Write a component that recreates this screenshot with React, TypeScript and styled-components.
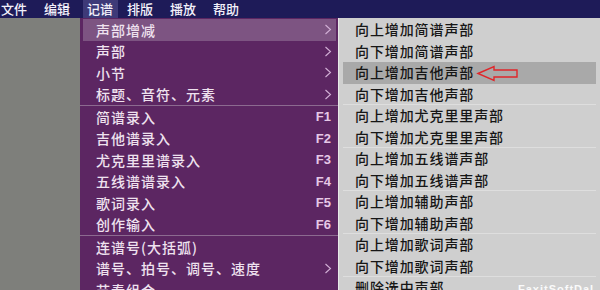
import React from "react";
import styled, { createGlobalStyle } from "styled-components";

const Global = createGlobalStyle`
  html, body { margin: 0; padding: 0; background: #7e7f7b; }
  body { font-family: "Noto Sans CJK SC", "Noto Sans", sans-serif; }
`;

const Screen = styled.div`
  position: relative;
  width: 600px;
  height: 290px;
  overflow: hidden;
  display: flex;
  flex-direction: column;
  background: #7e7f7b;
`;

const MenuBar = styled.div`
  height: 18px;
  flex: none;
  background: #1e1b58;
  display: flex;
  align-items: stretch;
`;

const MenuItem = styled.div<{ $active?: boolean }>`
  width: 43px;
  box-sizing: border-box;
  padding-left: ${(p) => (p.$active ? "4px" : "1px")};
  margin-left: ${(p) => (p.$active ? "-3px" : "0")};
  background: ${(p) => (p.$active ? "#3e3a78" : "transparent")};
  color: #f2f0fa;
  font-size: 13px;
  font-weight: 500;
  line-height: 18px;
`;

const ActiveItem = styled(MenuItem)`
  width: 35px;
  margin-right: 8px;
`;

const Body = styled.div`
  flex: 1;
  display: flex;
  min-height: 0;
`;

const Side = styled.div`
  width: 80px;
  flex: none;
  background: #7e7f7b;
`;

const Menu = styled.div`
  width: 258px;
  flex: none;
  background: #5c2662;
  padding-top: 1px;
  box-sizing: border-box;
  display: flex;
  flex-direction: column;
`;

const Row = styled.div<{ $hot?: boolean }>`
  height: 21.5px;
  flex: none;
  display: flex;
  align-items: center;
  margin: 0 2px 0 3px;
  padding: 0 4px 0 13px;
  background: ${(p) => (p.$hot ? "#7d5482" : "transparent")};
  color: #efe2ef;
  font-size: 14px;
  font-weight: 500;
  letter-spacing: 1px;
`;

const Label = styled.span`
  flex: 1;
  white-space: nowrap;
`;

const Key = styled.span`
  font-family: "Liberation Sans", Arial, sans-serif;
  font-weight: bold;
  font-size: 13px;
  color: #e6c8e6;
  letter-spacing: 0;
  padding-right: 1px;
`;

const Chevron = styled.svg`
  width: 8px;
  height: 11px;
  margin-right: 0;
`;

const Sep = styled.div`
  height: 1px;
  flex: none;
  background: #8c6a90;
`;

const Sub = styled.div`
  flex: 1;
  background: #cfcfcf;
  border-left: 1px solid #e8e8e8;
  padding-top: 1px;
  box-sizing: border-box;
  display: flex;
  flex-direction: column;
`;

const SubRow = styled.div<{ $hot?: boolean; $line?: boolean }>`
  height: 21.5px;
  flex: none;
  box-sizing: border-box;
  display: flex;
  align-items: center;
  margin: 0 4px;
  padding-left: 12px;
  background: ${(p) => (p.$hot ? "#a9a9a9" : "transparent")};
  border-bottom: 1px solid ${(p) => (p.$line ? "#dedede" : "transparent")};
  color: #161616;
  font-size: 14px;
  font-weight: 500;
  letter-spacing: 0.9px;
  white-space: nowrap;
`;

const Arrow = styled.svg`
  position: absolute;
  left: 476px;
  top: 64px;
  width: 46px;
  height: 20px;
`;

const Watermark = styled.div`
  position: absolute;
  left: 518px;
  top: 283px;
  font-family: "Liberation Sans", Arial, sans-serif;
  font-size: 11px;
  font-weight: bold;
  letter-spacing: 1px;
  color: #fafafa;
`;

const Caret = () => (
  <Chevron viewBox="0 0 8 11">
    <path d="M1.5 1 L6.5 5.5 L1.5 10" fill="none" stroke="#d2b0d6" strokeWidth="1.1" />
  </Chevron>
);

const subItems = [
  "向上增加简谱声部",
  "向下增加简谱声部",
  "向上增加吉他声部",
  "向下增加吉他声部",
  "向上增加尤克里里声部",
  "向下增加尤克里里声部",
  "向上增加五线谱声部",
  "向下增加五线谱声部",
  "向上增加辅助声部",
  "向下增加辅助声部",
  "向上增加歌词声部",
  "向下增加歌词声部",
  "删除选中声部",
];

export default function App() {
  return (
    <Screen>
      <Global />
      <MenuBar>
        <MenuItem>文件</MenuItem>
        <MenuItem>编辑</MenuItem>
        <ActiveItem $active>记谱</ActiveItem>
        <MenuItem>排版</MenuItem>
        <MenuItem>播放</MenuItem>
        <MenuItem>帮助</MenuItem>
      </MenuBar>
      <Body>
        <Side />
        <Menu>
          <Row $hot>
            <Label>声部增减</Label>
            <Caret />
          </Row>
          <Row>
            <Label>声部</Label>
            <Caret />
          </Row>
          <Row>
            <Label>小节</Label>
            <Caret />
          </Row>
          <Row>
            <Label>标题、音符、元素</Label>
            <Caret />
          </Row>
          <Sep />
          <Row><Label>简谱录入</Label><Key>F1</Key></Row>
          <Row><Label>吉他谱录入</Label><Key>F2</Key></Row>
          <Row><Label>尤克里里谱录入</Label><Key>F3</Key></Row>
          <Row><Label>五线谱谱录入</Label><Key>F4</Key></Row>
          <Row><Label>歌词录入</Label><Key>F5</Key></Row>
          <Row><Label>创作输入</Label><Key>F6</Key></Row>
          <Sep />
          <Row><Label>连谱号(大括弧)</Label></Row>
          <Row>
            <Label>谱号、拍号、调号、速度</Label>
            <Caret />
          </Row>
          <Row><Label>节奏组合</Label></Row>
        </Menu>
        <Sub>
          {subItems.map((t, i) => (
            <SubRow key={t} $hot={i === 2} $line={i % 2 === 1 && i > 1}>
              {t}
            </SubRow>
          ))}
        </Sub>
      </Body>
      <Arrow viewBox="0 0 46 20">
        <path
          d="M2 9.5 L18 2.5 L18 6 L41 6 L41 13 L18 13 L18 16.5 Z"
          fill="none"
          stroke="#e0262a"
          strokeWidth="1.4"
          strokeLinejoin="miter"
        />
      </Arrow>
      <Watermark>FaxitSoftDal</Watermark>
    </Screen>
  );
}
